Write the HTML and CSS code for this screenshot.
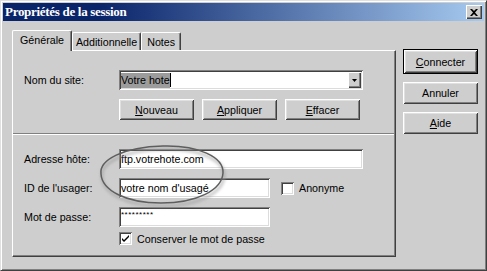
FILE: index.html
```html
<!DOCTYPE html>
<html lang="fr">
<head>
  <meta charset="UTF-8">
  <title>Propriétés de la session</title>
  <link rel="stylesheet" href="styles.css">
</head>
<body>
  <div class="window">
    <div class="titlebar">
      <span class="title">Propriétés de la session</span>
      <span class="close-btn">
        <svg width="8" height="7" viewBox="0 0 8 7"><path d="M0 0h2l2 2 2-2h2L5 3.5 8 7H6L4 5 2 7H0l3-3.5z" fill="#000"/></svg>
      </span>
    </div>

    <div class="content">
      <div class="tab-area">
        <div class="tabs">
          <div class="tab active">Générale</div>
          <div class="tab">Additionnelle</div>
          <div class="tab">Notes</div>
        </div>
        <div class="panel">
          <div class="section-top">
            <div class="row">
              <label class="lbl">Nom du site:</label>
              <div class="field combo">
                <span class="sel">Votre hote</span><span class="caret"></span>
                <span class="drop-btn"><svg width="5" height="3" viewBox="0 0 5 3"><path d="M0 0h5L2.5 3z" fill="#000"/></svg></span>
              </div>
            </div>
            <div class="btn-row">
              <button class="btn small"><u>N</u>ouveau</button>
              <button class="btn small"><u>A</u>ppliquer</button>
              <button class="btn small"><u>E</u>ffacer</button>
            </div>
          </div>
          <div class="sep"></div>
          <div class="section-bottom">
            <div class="row">
              <label class="lbl">Adresse hôte:</label>
              <div class="field wide">ftp.votrehote.com</div>
            </div>
            <div class="row">
              <label class="lbl">ID de l'usager:</label>
              <div class="field narrow">votre nom d'usagé</div>
              <span class="check anon"></span>
              <span class="check-lbl">Anonyme</span>
            </div>
            <div class="row">
              <label class="lbl">Mot de passe:</label>
              <div class="field narrow pwd">*********</div>
            </div>
            <div class="check-row">
              <span class="check">
                <svg width="9" height="9" viewBox="0 0 9 9"><path d="M1 4l2 2 5-5v2L3 8 1 6z" fill="#000"/></svg>
              </span>
              <span class="check-lbl">Conserver le mot de passe</span>
            </div>
          </div>
        </div>
      </div>

      <div class="side">
        <button class="btn default"><u>C</u>onnecter</button>
        <button class="btn">Annuler</button>
        <button class="btn"><u>A</u>ide</button>
      </div>
    </div>

    <!-- hand drawn circle around the host / user fields -->
    <svg class="mark" width="150" height="80" viewBox="0 0 150 80">
      <defs>
        <filter id="soft" x="-20%" y="-20%" width="140%" height="140%">
          <feGaussianBlur stdDeviation="1.6"/>
        </filter>
      </defs>
      <path d="M8 34 C6 20 30 7 70 6 C105 5 131 17 130 33 C129 50 104 63 68 63 C32 63 9 50 8 34 Z" fill="none" stroke="#999" stroke-width="3" opacity="0.55" filter="url(#soft)" transform="translate(1 3)"/>
      <path d="M8 34 C6 20 30 7 70 6 C105 5 131 17 130 33 C129 50 104 63 68 63 C32 63 9 50 8 34 Z" fill="none" stroke="#5e5e5e" stroke-width="1.5"/>
    </svg>
  </div>
</body>
</html>
```

FILE: styles.css
```css
* {
  box-sizing: border-box;
}

body {
  margin: 0;
  background: #cecece;
  font-family: "Liberation Sans", Arial, sans-serif;
  font-size: 10.7px;
  color: #000;
}

.window {
  position: relative;
  width: 487px;
  height: 271px;
  background: #cecece;
  border: 1px solid;
  border-color: #e0e0e0 #404040 #404040 #e0e0e0;
  box-shadow: inset 1px 1px #fff, inset -1px -1px #808080;
  padding: 2px;
}

.titlebar {
  height: 18px;
  display: flex;
  align-items: center;
  justify-content: space-between;
  padding: 0 2px 0 2px;
  background: linear-gradient(90deg, #0a246a 0%, #0a246a 20%, #a6caf0 100%);
}
.title {
  font-family: "Liberation Serif", "Times New Roman", serif;
  font-weight: bold;
  font-size: 13px;
  letter-spacing: -0.3px;
  color: #fff;
}
.close-btn {
  width: 16px;
  height: 14px;
  display: flex;
  align-items: center;
  justify-content: center;
  background: #cecece;
  box-shadow: inset 1px 1px #fff, inset -1px -1px #404040, inset -2px -2px #808080;
}

.content {
  display: flex;
  padding: 9px 0 0 9px;
}

.tab-area {
  width: 384px;
}
.tabs {
  display: flex;
  align-items: flex-end;
  height: 20px;
}
.tab {
  position: relative;
  height: 18px;
  padding: 0 3px;
  display: flex;
  align-items: center;
  border: 1px solid;
  border-bottom: none;
  border-color: #fff #404040 #404040 #fff;
  border-radius: 2px 2px 0 0;
  box-shadow: inset -1px 0 #808080;
}
.tab:last-child {
  padding: 0 5px;
}
.tab.active {
  height: 21px;
  margin-bottom: -1px;
  padding: 0 7px 2px 7px;
  background: #cecece;
  z-index: 1;
}
.panel {
  height: 207px;
  border: 1px solid;
  border-color: #fff #404040 #404040 #fff;
  box-shadow: inset -1px -1px #808080;
}

.section-top {
  padding: 19px 0 0 11px;
}
.section-bottom {
  padding: 14px 0 0 11px;
  display: flex;
  flex-direction: column;
  gap: 9px;
}
.sep {
  margin-top: 13px;
  height: 2px;
  border-top: 1px solid #808080;
  border-bottom: 1px solid #fff;
  margin-right: 1px;
}

.row {
  display: flex;
  align-items: center;
  height: 20px;
}
.lbl {
  width: 95px;
}

.field {
  position: relative;
  height: 20px;
  display: flex;
  align-items: center;
  padding: 0 2px;
  background: #fff;
  white-space: nowrap;
  box-shadow: inset 1px 1px #808080, inset -1px -1px #fff, inset 2px 2px #404040, inset -2px -2px #dcdcdc;
}
.combo {
  width: 244px;
}
.wide {
  width: 244px;
}
.narrow {
  width: 151px;
}
.sel {
  background: #9c9c9c;
  line-height: 15px;
}
.caret {
  width: 1px;
  height: 14px;
  background: #000;
}
.drop-btn {
  position: absolute;
  right: 2px;
  top: 2px;
  width: 13px;
  height: 16px;
  display: flex;
  align-items: center;
  justify-content: center;
  background: #cecece;
  box-shadow: inset 1px 1px #fff, inset -1px -1px #404040, inset -2px -2px #808080;
}
.pwd {
  align-items: flex-start;
  padding-top: 3px;
  font-size: 8px;
  letter-spacing: 0.5px;
}

.btn-row {
  display: flex;
  gap: 8px;
  margin: 9px 0 0 95px;
}

.btn {
  width: 75px;
  height: 22px;
  padding: 0;
  border: none;
  background: #cecece;
  font-family: "Liberation Sans", Arial, sans-serif;
  font-size: 10.7px;
  color: #000;
  box-shadow: inset 1px 1px #fff, inset -1px -1px #404040, inset 2px 2px #e0e0e0, inset -2px -2px #808080;
}
.btn.small {
  width: 75px;
  height: 21px;
}
.btn.default {
  height: 25px;
  border: 1px solid #000;
}

.side {
  display: flex;
  flex-direction: column;
  gap: 8px;
  margin: 19px 0 0 7px;
}

.check {
  width: 13px;
  height: 13px;
  display: flex;
  align-items: center;
  justify-content: center;
  background: #fff;
  box-shadow: inset 1px 1px #808080, inset -1px -1px #fff, inset 2px 2px #404040, inset -2px -2px #dcdcdc;
}
.anon {
  margin-left: 11px;
}
.check-lbl {
  margin-left: 5px;
}
.check-row {
  display: flex;
  align-items: center;
  margin: -4px 0 0 95px;
}

.mark {
  position: absolute;
  left: 92px;
  top: 139px;
}
```
